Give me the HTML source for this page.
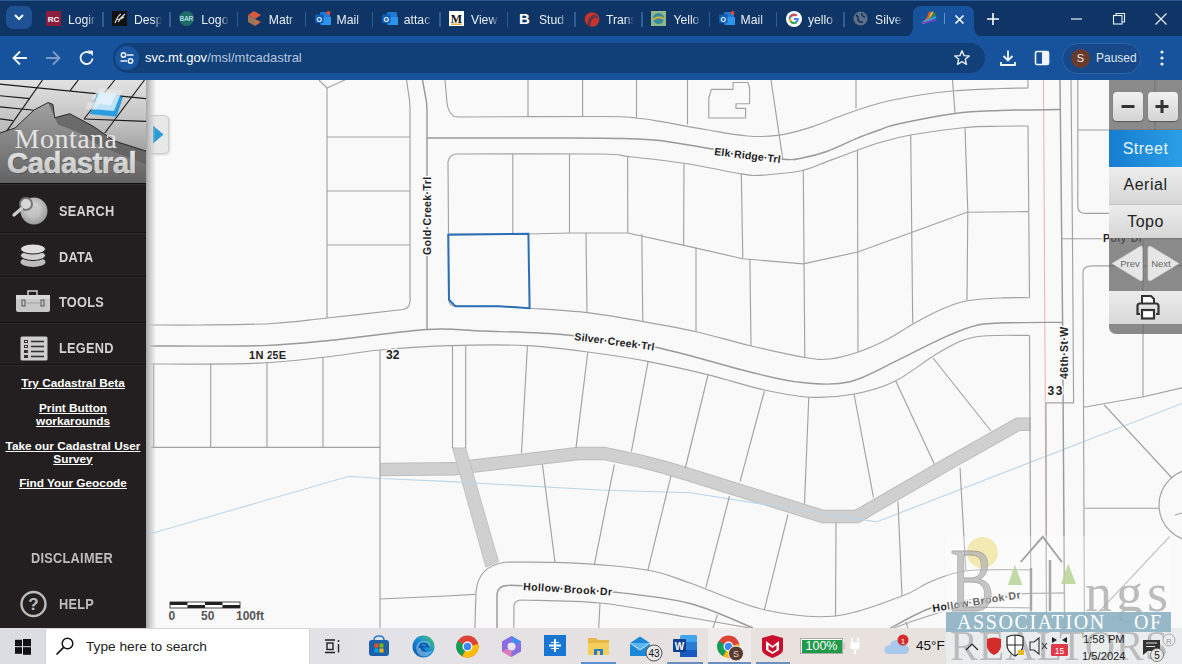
<!DOCTYPE html>
<html><head><meta charset="utf-8">
<style>
*{margin:0;padding:0;box-sizing:border-box}
html,body{width:1182px;height:664px;overflow:hidden;background:#f9f9f9;font-family:"Liberation Sans",sans-serif}
.abs{position:absolute}
#tabs{position:absolute;left:0;top:0;width:1182px;height:37px;background:#0f3566}
#tb{position:absolute;left:0;top:36px;width:1182px;height:44px;background:#17539c}
.tab{position:absolute;top:0;height:36px;color:#e6ecf5;font-size:13px}
.tab .fav{position:absolute;left:10px;top:11px;width:15px;height:15px}
.tab .tt{position:absolute;left:32px;top:11px;width:28px;overflow:hidden;white-space:nowrap;line-height:15px}
.sep{position:absolute;top:12px;width:1px;height:14px;background:#3d6aa3}
#side{position:absolute;left:0;top:80px;width:146px;height:548px;background:#231f20}
#map{position:absolute;left:146px;top:80px;width:1036px;height:548px;background:#f9f9f9;overflow:hidden}
#task{position:absolute;left:0;top:628px;width:1182px;height:36px;background:linear-gradient(to right,#e0e1e6 0%,#e3e2e6 35%,#e8e1de 65%,#e8e2de 80%,#e6e6e4 100%)}
.mi{position:absolute;left:59px;color:#d2d2d2;font-weight:bold;font-size:14.5px;letter-spacing:0.3px;transform:scaleX(0.88);transform-origin:0 0}
.row{position:absolute;left:0;width:146px;height:2px;background:#141213;border-bottom:1px solid #2e2a2b}
.lnk{position:absolute;left:0;width:146px;text-align:center;color:#fff;font-weight:bold;font-size:11.8px;text-decoration:underline;line-height:12.5px}
</style></head><body>

<!-- TAB STRIP -->
<div id="tabs">
  <div class="abs" style="left:0;top:0;width:1182px;height:1px;background:#2a5a94"></div>
  <div class="abs" style="left:6px;top:6px;width:26px;height:23px;border-radius:7px;background:#1e5294"></div>
  <svg class="abs" style="left:13px;top:12px" width="12" height="10"><path d="M2 3 L6 7 L10 3" stroke="#fff" stroke-width="2" fill="none"/></svg>
<div class="abs" style="left:46.0px;top:11px;width:16px;height:16px"><svg width="15" height="15"><rect width="15" height="15" rx="1.5" fill="#8a1c3c"/><text x="7.5" y="11" text-anchor="middle" font-family="Liberation Sans" font-weight="bold" font-size="8" fill="#fff">RC</text></svg></div><div class="abs" style="left:68.0px;top:12px;width:28px;height:16px;overflow:hidden;white-space:nowrap;color:#e8eef6;font-size:12.2px;line-height:16px;-webkit-mask-image:linear-gradient(to right,#000 70%,transparent)">Login</div><div class="abs" style="left:112.0px;top:11px;width:16px;height:16px"><svg width="15" height="15"><rect width="15" height="15" fill="#111"/><path d="M3 12 Q6 4 9 3 M6 11 Q9 6 13 3 M5 8 Q8 9 12 6" stroke="#ddd" stroke-width="1.2" fill="none"/></svg></div><div class="abs" style="left:134.0px;top:12px;width:28px;height:16px;overflow:hidden;white-space:nowrap;color:#e8eef6;font-size:12.2px;line-height:16px;-webkit-mask-image:linear-gradient(to right,#000 70%,transparent)">Desp</div><div class="abs" style="left:179.3px;top:11px;width:16px;height:16px"><svg width="15" height="15"><circle cx="7.5" cy="7.5" r="7.5" fill="#1f6b6a"/><text x="7.5" y="10" text-anchor="middle" font-family="Liberation Sans" font-size="6.5" fill="#dff">BAR</text></svg></div><div class="abs" style="left:201.3px;top:12px;width:28px;height:16px;overflow:hidden;white-space:nowrap;color:#e8eef6;font-size:12.2px;line-height:16px;-webkit-mask-image:linear-gradient(to right,#000 70%,transparent)">Logo</div><div class="abs" style="left:246.8px;top:11px;width:16px;height:16px"><svg width="15" height="15"><path d="M1 4 L7 0 L14 4 L8 8 Z" fill="#d65a3c"/><path d="M1 4 L8 8 L8 15 L1 11 Z" fill="#9c7458"/><path d="M8 8 L14 11 L8 15Z" fill="#c86a48"/></svg></div><div class="abs" style="left:268.8px;top:12px;width:28px;height:16px;overflow:hidden;white-space:nowrap;color:#e8eef6;font-size:12.2px;line-height:16px;-webkit-mask-image:linear-gradient(to right,#000 70%,transparent)">Matr</div><div class="abs" style="left:314.6px;top:11px;width:16px;height:16px"><svg width="16" height="15" viewBox="0 0 16 15"><rect x="5" y="1" width="10" height="13" rx="1" fill="#1f7ad6"/><rect x="7" y="6" width="9" height="8" fill="#2c95ea"/><rect x="0" y="3.5" width="8.5" height="8.5" rx="1" fill="#0c5db8"/><text x="4.2" y="10.5" text-anchor="middle" font-family="Liberation Sans" font-weight="bold" font-size="7" fill="#fff">O</text><circle cx="13.5" cy="2" r="2" fill="#e04a3a"/></svg></div><div class="abs" style="left:336.6px;top:12px;width:28px;height:16px;overflow:hidden;white-space:nowrap;color:#e8eef6;font-size:12.2px;line-height:16px;-webkit-mask-image:linear-gradient(to right,#000 70%,transparent)">Mail</div><div class="abs" style="left:381.8px;top:11px;width:16px;height:16px"><svg width="16" height="15" viewBox="0 0 16 15"><rect x="5" y="1" width="10" height="13" rx="1" fill="#1f7ad6"/><rect x="7" y="6" width="9" height="8" fill="#2c95ea"/><rect x="0" y="3.5" width="8.5" height="8.5" rx="1" fill="#0c5db8"/><text x="4.2" y="10.5" text-anchor="middle" font-family="Liberation Sans" font-weight="bold" font-size="7" fill="#fff">O</text></svg></div><div class="abs" style="left:403.8px;top:12px;width:28px;height:16px;overflow:hidden;white-space:nowrap;color:#e8eef6;font-size:12.2px;line-height:16px;-webkit-mask-image:linear-gradient(to right,#000 70%,transparent)">attac</div><div class="abs" style="left:449.0px;top:11px;width:16px;height:16px"><svg width="15" height="15"><rect width="15" height="15" fill="#fff"/><text x="7.5" y="12" text-anchor="middle" font-family="Liberation Serif" font-weight="bold" font-size="12" fill="#111">M</text><rect x="2" y="12.5" width="11" height="1.5" fill="#e0b040"/></svg></div><div class="abs" style="left:471.0px;top:12px;width:28px;height:16px;overflow:hidden;white-space:nowrap;color:#e8eef6;font-size:12.2px;line-height:16px;-webkit-mask-image:linear-gradient(to right,#000 70%,transparent)">View</div><div class="abs" style="left:516.9px;top:11px;width:16px;height:16px"><svg width="15" height="15"><text x="7.5" y="13" text-anchor="middle" font-family="Liberation Sans" font-weight="bold" font-size="15" fill="#fff">B</text></svg></div><div class="abs" style="left:538.9px;top:12px;width:28px;height:16px;overflow:hidden;white-space:nowrap;color:#e8eef6;font-size:12.2px;line-height:16px;-webkit-mask-image:linear-gradient(to right,#000 70%,transparent)">Stud</div><div class="abs" style="left:584.0px;top:11px;width:16px;height:16px"><svg width="16" height="16"><circle cx="8" cy="8.5" r="7.3" fill="#c8342c"/><path d="M3 15 Q4 6 9 4 Q13 3 14 8 Q12 6 9.5 7 Q6.5 9 6.5 15Z" fill="#0f3566" opacity="0.55"/></svg></div><div class="abs" style="left:606.0px;top:12px;width:28px;height:16px;overflow:hidden;white-space:nowrap;color:#e8eef6;font-size:12.2px;line-height:16px;-webkit-mask-image:linear-gradient(to right,#000 70%,transparent)">Trans</div><div class="abs" style="left:651.4px;top:11px;width:16px;height:16px"><svg width="15" height="15"><rect width="15" height="15" fill="#8fb88a"/><circle cx="7.5" cy="7.5" r="5.5" fill="#3a8a9a"/><path d="M2 9 Q7 4 13 8" stroke="#c8b040" stroke-width="2" fill="none"/></svg></div><div class="abs" style="left:673.4px;top:12px;width:28px;height:16px;overflow:hidden;white-space:nowrap;color:#e8eef6;font-size:12.2px;line-height:16px;-webkit-mask-image:linear-gradient(to right,#000 70%,transparent)">Yello</div><div class="abs" style="left:718.6px;top:11px;width:16px;height:16px"><svg width="16" height="15" viewBox="0 0 16 15"><rect x="5" y="1" width="10" height="13" rx="1" fill="#1f7ad6"/><rect x="7" y="6" width="9" height="8" fill="#2c95ea"/><rect x="0" y="3.5" width="8.5" height="8.5" rx="1" fill="#0c5db8"/><text x="4.2" y="10.5" text-anchor="middle" font-family="Liberation Sans" font-weight="bold" font-size="7" fill="#fff">O</text><circle cx="13.5" cy="2" r="2" fill="#e04a3a"/></svg></div><div class="abs" style="left:740.6px;top:12px;width:28px;height:16px;overflow:hidden;white-space:nowrap;color:#e8eef6;font-size:12.2px;line-height:16px;-webkit-mask-image:linear-gradient(to right,#000 70%,transparent)">Mail</div><div class="abs" style="left:785.9px;top:11px;width:16px;height:16px"><svg width="16" height="16"><circle cx="8" cy="8" r="8" fill="#fff"/><path d="M12.5 7 H8 V9 H10.8 A3.2 3.2 0 1 1 10 5.3 L11.4 3.9 A5.2 5.2 0 1 0 13 8 Z" fill="#4285f4"/><path d="M4 5.5 A5 5 0 0 1 11.4 3.9 L10 5.3 A3 3 0 0 0 5.7 6.5Z" fill="#ea4335"/><path d="M3 8 A5 5 0 0 0 4 11 L5.7 9.7 A3 3 0 0 1 5.4 7Z" fill="#fbbc05"/><path d="M4 11 A5 5 0 0 0 11.5 11.8 L10 10.5 A3 3 0 0 1 5.7 9.7Z" fill="#34a853"/></svg></div><div class="abs" style="left:807.9px;top:12px;width:28px;height:16px;overflow:hidden;white-space:nowrap;color:#e8eef6;font-size:12.2px;line-height:16px;-webkit-mask-image:linear-gradient(to right,#000 70%,transparent)">yello</div><div class="abs" style="left:853.1px;top:11px;width:16px;height:16px"><svg width="15" height="15"><circle cx="7.5" cy="7.5" r="7" fill="#5f6f85"/><path d="M3 4 Q6 6 5 9 Q7 12 10 11 M9 2 Q8 5 12 6" stroke="#0f3566" stroke-width="1.6" fill="none"/></svg></div><div class="abs" style="left:875.1px;top:12px;width:28px;height:16px;overflow:hidden;white-space:nowrap;color:#e8eef6;font-size:12.2px;line-height:16px;-webkit-mask-image:linear-gradient(to right,#000 70%,transparent)">Silver</div><div class="abs" style="left:102.0px;top:12px;width:1.5px;height:15px;background:#2f5d96"></div><div class="abs" style="left:169.3px;top:12px;width:1.5px;height:15px;background:#2f5d96"></div><div class="abs" style="left:236.8px;top:12px;width:1.5px;height:15px;background:#2f5d96"></div><div class="abs" style="left:304.6px;top:12px;width:1.5px;height:15px;background:#2f5d96"></div><div class="abs" style="left:371.8px;top:12px;width:1.5px;height:15px;background:#2f5d96"></div><div class="abs" style="left:439.0px;top:12px;width:1.5px;height:15px;background:#2f5d96"></div><div class="abs" style="left:506.9px;top:12px;width:1.5px;height:15px;background:#2f5d96"></div><div class="abs" style="left:574.0px;top:12px;width:1.5px;height:15px;background:#2f5d96"></div><div class="abs" style="left:641.4px;top:12px;width:1.5px;height:15px;background:#2f5d96"></div><div class="abs" style="left:708.6px;top:12px;width:1.5px;height:15px;background:#2f5d96"></div><div class="abs" style="left:775.9px;top:12px;width:1.5px;height:15px;background:#2f5d96"></div><div class="abs" style="left:843.1px;top:12px;width:1.5px;height:15px;background:#2f5d96"></div><svg class="abs" style="left:903px;top:0" width="84" height="37" viewBox="0 0 84 37">
<path d="M0 37 Q9 37 10 28 L10 14 Q10 6 18 6 L63 6 Q71 6 71 14 L71 28 Q72 37 81 37 Z" fill="#17539c"/></svg>
<svg class="abs" style="left:921px;top:11px" width="16" height="14" viewBox="0 0 16 14">
<path d="M1 12 L15 3" stroke="#3a8a3a" stroke-width="2"/><path d="M3 12 L12 1" stroke="#e0c030" stroke-width="2"/><path d="M5 12 L9 0.5" stroke="#e05030" stroke-width="2"/><path d="M1 12 L15 6" stroke="#30a0e0" stroke-width="2"/><path d="M1 12 L15 9" stroke="#8040c0" stroke-width="1.6"/></svg>
<div class="abs" style="left:944px;top:13px;width:1px;height:11px;background:#6a8ec0"></div>
<svg class="abs" style="left:954px;top:14px" width="11" height="11"><path d="M1.5 1.5 L9.5 9.5 M9.5 1.5 L1.5 9.5" stroke="#fff" stroke-width="1.6"/></svg>
<svg class="abs" style="left:986px;top:12px" width="14" height="14"><path d="M7 1 V13 M1 7 H13" stroke="#fff" stroke-width="1.6"/></svg>
<svg class="abs" style="left:1070px;top:12px" width="14" height="14"><path d="M1 7 H12" stroke="#e8eef6" stroke-width="1.2"/></svg>
<svg class="abs" style="left:1112px;top:12px" width="14" height="14"><rect x="1.5" y="3.5" width="8.5" height="8.5" fill="none" stroke="#e8eef6" stroke-width="1.1"/><path d="M4 3.5 V1.5 H12.5 V10 H10" fill="none" stroke="#e8eef6" stroke-width="1.1"/></svg>
<svg class="abs" style="left:1154px;top:12px" width="14" height="14"><path d="M1.5 1.5 L12.5 12.5 M12.5 1.5 L1.5 12.5" stroke="#e8eef6" stroke-width="1.2"/></svg>
</div>

<!-- TOOLBAR -->
<div id="tb">
  <svg class="abs" style="left:11px;top:13px" width="18" height="18"><path d="M16 9 H3 M9 2.5 L2.5 9 L9 15.5" stroke="#f0f4fa" stroke-width="1.8" fill="none"/></svg>
  <svg class="abs" style="left:44px;top:13px" width="18" height="18"><path d="M2 9 H15 M9 2.5 L15.5 9 L9 15.5" stroke="#7d9dc8" stroke-width="1.8" fill="none"/></svg>
  <svg class="abs" style="left:78px;top:13px" width="18" height="18"><path d="M14.5 9.5 A6 6 0 1 1 12.5 4.5" stroke="#f0f4fa" stroke-width="1.9" fill="none"/><path d="M9.5 1.5 L15 1.8 L14.8 7 Z" fill="#f0f4fa"/></svg>
  <div class="abs" style="left:113px;top:7px;width:872px;height:30px;border-radius:15px;background:#113f78"></div>
  <div class="abs" style="left:115px;top:10px;width:24px;height:24px;border-radius:12px;background:#1a56a0"></div>
  <svg class="abs" style="left:119px;top:14px" width="16" height="16"><path d="M8 5 H14.5 M1.5 11 H8" stroke="#f0f4fa" stroke-width="1.6"/><circle cx="4.5" cy="5" r="2.2" fill="none" stroke="#f0f4fa" stroke-width="1.5"/><circle cx="11.5" cy="11" r="2.2" fill="none" stroke="#f0f4fa" stroke-width="1.5"/></svg>
  <div class="abs" style="left:145px;top:14px;font-size:13px;line-height:16px;color:#fff;white-space:nowrap">svc.mt.gov<span style="color:#b4c6de">/msl/mtcadastral</span></div>
  <svg class="abs" style="left:953px;top:13px" width="18" height="18"><path d="M9 1.8 L11.1 6.6 L16.2 7 L12.3 10.3 L13.5 15.3 L9 12.6 L4.5 15.3 L5.7 10.3 L1.8 7 L6.9 6.6 Z" fill="none" stroke="#e8eef6" stroke-width="1.4" stroke-linejoin="round"/></svg>
  <svg class="abs" style="left:999px;top:13px" width="18" height="18"><path d="M9 1.5 V11 M4.5 7 L9 11.5 L13.5 7 M2 13 V16 H16 V13" stroke="#f0f4fa" stroke-width="1.8" fill="none"/></svg>
  <svg class="abs" style="left:1034px;top:14px" width="16" height="16"><rect x="1.5" y="1.5" width="13" height="13" rx="1.5" fill="none" stroke="#f0f4fa" stroke-width="1.6"/><rect x="8" y="1.5" width="6.5" height="13" fill="#f0f4fa"/></svg>
  <div class="abs" style="left:1062px;top:7px;width:79px;height:31px;border-radius:15.5px;background:#17498a;border:1px solid #2b63a8"></div>
  <div class="abs" style="left:1071px;top:13px;width:19px;height:19px;border-radius:10px;background:#6a3b2c;color:#eee;font-size:11px;line-height:19px;text-align:center">S</div>
  <div class="abs" style="left:1096px;top:14px;font-size:12px;line-height:16px;color:#dde6f2">Paused</div>
  <svg class="abs" style="left:1158px;top:13px" width="8" height="18"><circle cx="4" cy="3" r="1.6" fill="#f0f4fa"/><circle cx="4" cy="9" r="1.6" fill="#f0f4fa"/><circle cx="4" cy="15" r="1.6" fill="#f0f4fa"/></svg>
</div>

<!-- MAP -->
<div id="map"></div>
<!-- MAPSVG -->
<svg class="abs" style="left:0;top:0" width="1182" height="664" viewBox="0 0 1182 664">
<defs><clipPath id="mc"><rect x="146" y="80" width="1036" height="548"/></clipPath></defs>
<g clip-path="url(#mc)">
<path d="M380 469.5 L455 468.8 L470 466.5 L578 453.5 L604 453.5 L640 461 L665 467.5 L690 475 L823 516.6 L857 516.4 L950 462.7 L1018 424.2 L1031 424.2" fill="none" stroke="#bdbdbd" stroke-width="13.5"/>
<path d="M380 469.5 L455 468.8 L470 466.5 L578 453.5 L604 453.5 L640 461 L665 467.5 L690 475 L823 516.6 L857 516.4 L950 462.7 L1018 424.2 L1031 424.2" fill="none" stroke="#d0d0d0" stroke-width="11.5"/>
<path d="M452.5 447.9 L465.7 447.9 L498.6 561.5 L485.8 567 Z" fill="#d0d0d0" stroke="#bdbdbd" stroke-width="0.8"/>
<path d="M146 535 L349 476.3 L380 478.5 L446 481.4 L600 490 L690 492.8 L876.6 521.9 L1182 403.5" fill="none" stroke="#bcd6ea" stroke-width="1.1"/>
<path d="M1043.5 80 L1046.5 628" fill="none" stroke="#eab0b0" stroke-width="1"/>
<g fill="none" stroke="#a2a2a2" stroke-width="1.15" stroke-linejoin="round">
<path d="M403.0 309.5 C390.3 310.9 348.7 315.7 327.0 318.0 C305.3 320.3 294.2 322.3 273.0 323.5 C251.8 324.7 220.5 324.8 200.0 325.0 C179.5 325.2 158.3 325.0 150.0 325.0"/>
<path d="M146.0 364.0 C163.8 363.9 223.0 364.5 252.6 363.4 C282.2 362.3 302.5 359.5 323.7 357.3 C344.9 355.1 358.8 351.9 380.0 350.0 C401.2 348.1 426.5 346.3 451.0 345.6 C475.5 344.9 504.2 344.5 527.0 345.6 C549.8 346.7 567.7 349.3 588.0 352.0 C608.3 354.7 628.9 357.8 649.0 361.6 C669.1 365.4 689.3 370.2 708.5 374.9 C727.7 379.6 747.5 386.3 764.4 390.0 C781.3 393.7 795.0 396.5 810.0 397.2 C825.0 397.9 840.3 396.7 854.5 394.0 C868.7 391.3 880.9 388.1 895.0 381.2 C909.1 374.3 925.7 359.9 939.0 352.5 C952.3 345.1 959.9 339.9 975.0 337.0 C990.1 334.1 1020.4 335.7 1029.5 335.4"/>
<path d="M455.4 306.3 C462.6 306.3 486.4 306.0 498.8 306.3 C511.2 306.6 514.9 307.1 529.6 308.2 C544.3 309.2 568.1 310.4 587.0 312.6 C605.9 314.8 624.6 318.3 642.8 321.5 C661.0 324.7 678.1 327.7 696.0 331.7 C713.9 335.7 732.2 341.4 750.4 345.7 C768.6 350.0 791.7 355.3 805.0 357.5 C818.3 359.7 821.1 359.9 830.0 359.0 C838.9 358.1 848.6 355.3 858.3 352.0 C868.0 348.7 878.9 343.7 888.0 339.0 C897.1 334.3 904.3 328.8 913.0 324.0 C921.7 319.2 931.2 313.8 940.0 310.0 C948.8 306.2 956.0 303.0 966.0 301.0 C976.0 299.0 989.4 298.6 1000.0 298.0 C1010.6 297.4 1024.6 297.8 1029.5 297.7"/>
<path d="M455.4 306.3 Q449 306 449 300 L448 162 Q449 156 454 154.5 L456 154  C480.0 154.0 571.3 153.6 600.0 154.0 C628.7 154.4 614.0 154.9 628.0 156.5 C642.0 158.1 665.4 160.4 684.2 163.3 C703.0 166.2 728.9 171.9 741.0 173.9 C753.1 175.9 750.3 175.5 757.0 175.4 C763.7 175.3 773.3 174.4 781.0 173.5 C788.7 172.6 795.5 172.2 803.3 170.2 C811.0 168.2 818.5 164.7 827.5 161.4 C836.5 158.1 848.5 153.5 857.3 150.3 C866.0 147.2 871.1 145.1 880.0 142.5 C888.9 139.9 896.4 137.5 910.6 135.0 C924.8 132.5 950.1 129.0 965.0 127.5 C979.9 126.0 989.5 126.5 1000.0 126.2 C1010.5 126.0 1023.3 126.0 1028.0 126.0 L1029.5 297.7"/>
<path d="M445 80 L447 103 Q448 112 454 116.5 L458 117  C482.5 116.9 575.3 116.3 605.0 116.5 C634.7 116.7 626.8 117.2 636.0 118.0 C645.2 118.8 648.2 119.4 660.0 121.4 C671.8 123.4 691.9 127.4 706.5 129.8 C721.1 132.2 735.7 135.1 747.5 136.0 C759.3 136.9 767.1 136.8 777.3 135.4 C787.5 134.1 797.4 131.5 808.9 127.9 C820.4 124.3 834.1 118.2 846.0 114.0 C857.9 109.8 867.7 106.2 880.0 103.0 C892.3 99.8 907.5 97.0 920.0 95.0 C932.5 93.0 941.7 91.8 955.0 90.7 C968.3 89.6 987.8 89.0 1000.0 88.5 C1012.2 88.0 1023.3 88.1 1028.0 88.0 L1028 80"/>
<path d="M449 234 L529 234 L570 233 L627.8 233 L684 245.4 L742.8 258.7 L803.2 263.9 L857.7 252 L912.2 232.2 L967 212.3 L1028 211.6"/>
<path d="M474.9 628 L476 592 Q478 566 505 562.2  C513.3 562.2 537.2 561.8 555.0 562.4 C572.8 563.0 595.0 564.3 611.6 565.8 C628.2 567.3 641.4 568.6 654.5 571.5 C667.6 574.4 671.7 576.6 690.0 583.0 C708.3 589.4 740.0 604.3 764.3 609.8 C788.5 615.3 812.5 618.3 835.5 616.0 C858.5 613.7 886.6 601.5 902.0 596.0 C917.4 590.5 919.2 586.8 927.7 583.0 C936.2 579.2 945.0 575.7 953.0 573.5 C961.0 571.3 963.0 570.6 976.0 570.0 C989.0 569.4 1021.8 569.8 1031.0 569.8"/>
<path d="M513.8 628 L514 605 Q515 600 523 600  C535.8 600.5 572.8 600.2 600.0 603.0 C627.2 605.8 661.0 612.8 686.0 617.0 C711.0 621.2 739.3 626.2 750.0 628.0"/>
<path d="M893.8 628.0 C899.4 626.0 916.4 619.6 927.7 616.3 C939.0 613.0 944.3 609.4 961.5 608.0 C978.7 606.6 1019.4 607.8 1031.0 607.8"/>
<path d="M319 80 L327 88 L345 80"/>
<path d="M327 88 L327 318"/>
<path d="M327 137 L410 137"/>
<path d="M327 191 L410 191"/>
<path d="M327 245 L410 245"/>
<path d="M406.5 80 L409.5 100 L410 108 L410 301 Q410 308 403 309.5"/>
<path d="M528 80 L528 116.5 M582.6 80 L582.6 116.5 M636.5 80 L636.5 118 M687.5 80 L687.5 124.5 M771 80 L782.8 159.2 M856 80 L856 108.4 M952.5 80 L955 113"/>
<path d="M733 82.5 L748 82.5 L749.6 88 L749.6 103.7 L736 103.7 L736 108.4 L745.6 108.4 L745.6 118 L708.8 118 L708.8 98 L711.4 89.4 L733 89.4 Z"/>
<path d="M512.8 154 L512.8 234 M569.5 154 L569.5 233 M627.6 156.7 L627.8 233 M684 163.3 L683.6 245.4 M741.3 173.9 L742.8 258.7 M803.3 170.2 L804.8 358 M857.5 150.3 L858 352 M910.7 135 L912.7 323 M965 127 L967.8 212 L967 300"/>
<path d="M586 233 L587 313 M641.8 234 L642.8 321.5 M696 247.5 L696 331.7 M749.9 259.5 L751 346"/>
<path d="M1029.5 335.4 L1031 628"/>
<path d="M153.6 364 L153.6 447.4 M210.7 363.5 L210.7 447.4 M267 362 L267 447.4 M323 357.5 L323 447.4 M380 350 L380 628 M151 447.4 L380 447.4"/>
<path d="M452.5 346 L452.5 447.9 M465.7 346 L465.7 447.9 M527.4 346 L521.5 453 M587.8 352 L576 447.9 M648 362 L631.4 451.7 M708 375 L685.3 468 M764.4 391 L740 481.7 M808.8 397 L804.5 503.8 M854 394 L873.5 497.5 M895.8 381 L934.3 464 M933 358 L991 431"/>
<path d="M542.4 464.3 L555 562.4 M614.4 464.3 L594.4 564.4 M671 475.7 L647.9 570.1 M729.5 496 L705.8 587.7 M788 514.3 L764.3 609.8 M836 522.8 L835.5 616 M898 501.6 L902 596 M960 467.5 L965.8 570.6 M600 603 L598.7 628 M717.5 614.7 L713 628 M905.7 622 L908 628"/>
<path d="M380 599 L446 596 L475 594.4"/>
<path d="M1071 80 L1072.4 228 L1073.6 402.8 L1046 402.8 L1046.5 628"/>
<path d="M1077.8 80 L1077.8 206.7 Q1078 213.4 1086 213.4 L1182 213.4 M1078 130 L1182 130"/>
<path d="M1062 238.7 L1182 238.7"/>
<path d="M1084.4 628 L1083 272 Q1083 265.8 1093 265.8 L1182 265.8"/>
<path d="M1084 407.3 L1143.5 396.8 L1182 387.8 M1143 238.7 L1143 396.8 M1155 80 L1155 130 M1104.3 405 L1172 478 M1085 508.2 L1159 508.2 M1169.8 536.4 L1085 626.7 M1175 515 L1182 513"/>
<circle cx="1195" cy="505" r="36"/>
</g>
<g fill="none" stroke="#9a9a9a" stroke-width="1.45" stroke-linejoin="round">
<path d="M146.0 346.0 C165.5 345.9 231.7 346.6 263.0 345.6 C294.3 344.6 306.7 342.7 334.0 340.0 C361.3 337.3 402.2 331.0 427.0 329.5 C451.8 328.0 459.7 330.1 483.0 331.0 C506.3 331.9 538.4 332.3 567.0 335.0 C595.6 337.7 624.0 340.8 654.5 347.0 C685.0 353.2 725.4 366.1 750.0 372.0 C774.6 377.9 785.3 380.9 802.0 382.5 C818.7 384.1 833.8 385.5 850.0 381.7 C866.2 377.9 884.0 366.7 899.0 359.6 C914.0 352.5 926.8 345.1 940.0 339.3 C953.2 333.5 964.7 327.8 978.0 325.0 C991.3 322.2 1005.9 323.0 1020.0 322.6 C1034.1 322.2 1055.5 322.4 1062.6 322.4"/>
<path d="M427.0 138.0 C449.2 138.0 527.4 137.9 560.0 138.0 C592.6 138.1 606.0 138.1 622.7 138.5 C639.4 138.9 644.8 138.7 660.0 140.5 C675.2 142.3 693.5 146.2 714.0 149.3 C734.5 152.4 767.9 157.8 782.8 159.2 C797.7 160.6 795.8 159.0 803.3 157.7 C810.8 156.4 818.5 154.4 827.5 151.2 C836.5 147.9 848.5 141.8 857.3 138.2 C866.0 134.6 873.2 132.2 880.0 129.8 C886.8 127.4 885.5 126.7 898.0 124.0 C910.5 121.3 938.0 115.8 955.0 113.5 C972.0 111.2 982.5 111.2 1000.0 110.5 C1017.5 109.8 1050.0 109.7 1060.0 109.5"/>
<path d="M497 628 L497 594 Q498 585.5 508 585.5  C510.5 585.5 505.5 584.7 523.0 585.8 C540.5 586.9 585.2 589.0 613.0 592.0 C640.8 595.0 666.7 597.5 690.0 603.5 C713.3 609.5 742.5 623.9 753.0 628.0"/>
<path d="M890.5 628.0 C897.2 624.7 916.9 612.8 931.0 608.0 C945.1 603.2 960.3 601.3 975.0 599.0 C989.7 596.7 1004.2 595.0 1019.0 594.0 C1033.8 593.0 1056.5 593.2 1064.0 593.0"/>
<path d="M422.5 80 L426.5 102 L427 110 L427 329.5"/>
<path d="M1060 80 L1062.6 322.4 L1064.6 628"/>
</g>
<path d="M448.2 234.7 L528.4 233.7 L529.6 308.2 L498.8 306.3 L455.4 306.3 L449 299.8 Z" fill="none" stroke="#2b70b6" stroke-width="2"/>
<g font-family="Liberation Sans" font-weight="bold" fill="#222" stroke="#f9f9f9" stroke-width="3" paint-order="stroke" stroke-linejoin="round">
<text x="249" y="358.5" font-size="11" letter-spacing="0.3">1N 2<tspan dx="-1">5</tspan>E</text>
<text x="386" y="358.5" font-size="12">32</text>
<text x="1047.5" y="394.5" font-size="12" letter-spacing="1.5">33</text>
<text font-size="10.5" transform="translate(431,255) rotate(-90)" letter-spacing="0.4">Gold·Creek·Trl</text>
<text font-size="10.5" transform="translate(1068,379) rotate(-90)" letter-spacing="0.4">46th·St·W</text>
<text font-size="10.5" transform="translate(714,155) rotate(7)" letter-spacing="0.15">Elk·Ridge·Trl</text>
<text font-size="10.5" transform="translate(574,340) rotate(7.5)" letter-spacing="0.2">Silver·Creek·Trl</text>
<text font-size="10.5" transform="translate(523,590) rotate(3.5)" letter-spacing="0.4">Hollow·Brook·Dr</text>
<text font-size="10.5" transform="translate(933,612) rotate(-9)" letter-spacing="0.4">Hollow·Brook·Dr</text>
<text font-size="10.5" x="1103" y="242" letter-spacing="0.4">Poly·Dr</text>
</g>
<g>
<rect x="170" y="602" width="70" height="6" fill="#fff" stroke="#222" stroke-width="0.8"/>
<rect x="170" y="602" width="17.5" height="3" fill="#222"/><rect x="187.5" y="605" width="17.5" height="3" fill="#222"/>
<rect x="205" y="602" width="17.5" height="3" fill="#222"/><rect x="222.5" y="605" width="17.5" height="3" fill="#222"/>
<text x="168.5" y="620" font-family="Liberation Sans" font-weight="bold" font-size="12" fill="#555">0</text>
<text x="201" y="620" font-family="Liberation Sans" font-weight="bold" font-size="12" fill="#555">50</text>
<text x="236" y="620" font-family="Liberation Sans" font-weight="bold" font-size="12" fill="#555">100ft</text>
</g>
</g>
</svg>
<!-- /MAPSVG -->


<!-- RIGHT PANEL -->
<div class="abs" style="left:1109px;top:80px;width:73px;height:254px;background:rgba(98,98,98,0.74);border-bottom-left-radius:7px"></div>
<div class="abs" style="left:1113px;top:92px;width:30px;height:29px;border-radius:4px;background:linear-gradient(#f2f2f2,#d4d4d4);box-shadow:0 1px 1px #555"></div>
<div class="abs" style="left:1148px;top:92px;width:30px;height:29px;border-radius:4px;background:linear-gradient(#f2f2f2,#d4d4d4);box-shadow:0 1px 1px #555"></div>
<svg class="abs" style="left:1113px;top:92px" width="65" height="29"><path d="M8.5 14.5 H21.5" stroke="#333" stroke-width="3"/><path d="M42.5 14.5 H55.5 M49 8 V21" stroke="#333" stroke-width="3"/></svg>
<div class="abs" style="left:1109px;top:130px;width:73px;height:36.5px;background:linear-gradient(to right,#167cd0,#2a9fe6)"></div>
<div class="abs" style="left:1109px;top:166.5px;width:73px;height:37px;background:linear-gradient(#ededed,#d6d6d6)"></div>
<div class="abs" style="left:1109px;top:204px;width:73px;height:33.5px;background:linear-gradient(#ededed,#d6d6d6);border-top:1px solid #c4c4c4"></div>
<div class="abs" style="left:1109px;top:140px;width:73px;text-align:center;font-size:16px;line-height:18px;color:#e8f5ff;letter-spacing:0.5px">Street</div>
<div class="abs" style="left:1109px;top:176px;width:73px;text-align:center;font-size:16px;line-height:18px;color:#222;letter-spacing:0.5px">Aerial</div>
<div class="abs" style="left:1109px;top:213px;width:73px;text-align:center;font-size:16px;line-height:18px;color:#222;letter-spacing:0.5px">Topo</div>
<svg class="abs" style="left:1109px;top:244px" width="73" height="40">
<path d="M3 19.5 L31 2.5 Q33.5 1.5 33.5 4 L33.5 35 Q33.5 37.5 31 36.5 Z" fill="#e6e6e6" stroke="#d0d0d0" stroke-width="0.6"/>
<path d="M70 19.5 L42 2.5 Q39 1.5 39 4 L39 35 Q39 37.5 42 36.5 Z" fill="#e6e6e6" stroke="#d0d0d0" stroke-width="0.6"/>
<text x="21" y="23" text-anchor="middle" font-family="Liberation Sans" font-size="9.5" fill="#666">Prev</text>
<text x="52" y="23" text-anchor="middle" font-family="Liberation Sans" font-size="9.5" fill="#666">Next</text>
</svg>
<div class="abs" style="left:1109px;top:291px;width:73px;height:33px;background:linear-gradient(#ececec,#d8d8d8)"></div>
<svg class="abs" style="left:1135px;top:294px" width="26" height="27" viewBox="0 0 26 27">
<path d="M7 9 V2 H16 L19 5 V9" fill="#fff" stroke="#333" stroke-width="2"/>
<path d="M5 20 H2.5 V12 Q2.5 9.5 5 9.5 H21 Q23.5 9.5 23.5 12 V20 H21" fill="none" stroke="#333" stroke-width="2.2"/>
<rect x="7" y="16" width="12" height="8.5" fill="#fff" stroke="#333" stroke-width="2.2"/>
</svg>
<!-- EXPAND TAB -->
<div class="abs" style="left:148px;top:115px;width:21px;height:39px;background:#e8e8e8;border:1px solid #cfcfcf;border-left:none;border-radius:0 5px 5px 0;box-shadow:1px 1px 2px rgba(0,0,0,0.15)"></div>
<svg class="abs" style="left:152px;top:125px" width="13" height="20"><path d="M1 0.5 L11.5 9.5 L1 18.5 Z" fill="#2a9bd8"/></svg>
<!-- SIDEBAR -->
<div id="side">
  <svg class="abs" style="left:0;top:0" width="146" height="104" viewBox="0 0 146 104">
    <defs>
      <linearGradient id="hg" x1="0" y1="0" x2="0" y2="1">
        <stop offset="0" stop-color="#e2e2e2"/><stop offset="0.45" stop-color="#bdbdbd"/><stop offset="1" stop-color="#7c7c7c"/>
      </linearGradient>
      <linearGradient id="mg" x1="0" y1="0" x2="0" y2="1">
        <stop offset="0" stop-color="#a0a0a0"/><stop offset="0.6" stop-color="#7c7c7c"/><stop offset="1" stop-color="#626262"/>
      </linearGradient>
      <linearGradient id="tg" x1="0" y1="0" x2="0" y2="1">
        <stop offset="0" stop-color="#ececec"/><stop offset="1" stop-color="#bdbdbd"/>
      </linearGradient>
    </defs>
    <rect x="0" y="0" width="146" height="104" fill="url(#hg)"/>
    <g stroke="#1c1c1c" stroke-width="1.15" fill="none">
      <path d="M0 4.1 L146 18.6"/>
      <path d="M0 15.7 L30 18.6"/>
      <path d="M0 26.9 L34 30.2"/>
      <path d="M0 38.9 L13 40.6"/>
      <path d="M84 39 L146 41.4"/>
      <path d="M42.5 0 L6 52.2"/>
      <path d="M78.3 0 L70 10.8"/>
      <path d="M114.7 0 L84 39"/>
      <path d="M144.5 0 L104.8 53"/>
    </g>
    <path d="M0 53 L15 48 L34 30 L48.1 22.5 L53 24.5 L54.7 37.8 L69.7 33.7 L92.9 46.1 L114.4 61 L146 71 L146 104 L0 104 Z" fill="url(#mg)"/>
    <path d="M48.1 22.5 L53 24.5 L54.7 37.8 L69.7 33.7 L92.9 46.1 L114.4 61 L146 71 L146 84.2 L99.5 66 L79.6 52.7 L58 44.4 Z" fill="#5e5e5e" opacity="0.75"/>
    <path d="M0 53 L15 48 L34 30 L48.1 22.5 L53 24.5 L54.7 37.8 L69.7 33.7 L92.9 46.1 L114.4 61 L146 71" fill="none" stroke="#1e1e1e" stroke-width="0.9"/>
    <path d="M100 8 L124 10 L117 20 L91 19 Z" fill="#e8e8e8" opacity="0.7"/>
    <path d="M97 14 L123 17 L116.4 36.8 L89.9 34 Z" fill="#2b9ee0"/>
    <path d="M98 13 L120 15.5 L114 31 L92 29 Z" fill="#bfe2f6"/>
    <path d="M100 12 L116 13.5 L111 25 L95 24 Z" fill="#e4f2fb" opacity="0.9"/>
    <path d="M88 22 L100 23 L96 30 L85 29Z" fill="#eeeeee" opacity="0.5"/>
    <text x="14.5" y="68" font-family="Liberation Serif" font-size="28" fill="#e4e4e4" letter-spacing="0.5">Montana</text>
    <text x="8" y="93.5" font-family="Liberation Sans" font-weight="bold" font-size="29.5" fill="#2a2a2a" opacity="0.5" letter-spacing="-0.6">Cadastral</text>
    <text x="7" y="93" font-family="Liberation Sans" font-weight="bold" font-size="29.5" fill="url(#tg)" stroke="#dcdcdc" stroke-width="0.5" letter-spacing="-0.6">Cadastral</text>
  </svg>
  <div class="row" style="top:103px"></div>
  <div class="row" style="top:152px"></div>
  <div class="row" style="top:196px"></div>
  <div class="row" style="top:242px"></div>
  <div class="row" style="top:284px"></div>
  <svg class="abs" style="left:10px;top:114px" width="40" height="34" viewBox="0 0 40 34">
    <defs><radialGradient id="gl" cx="0.45" cy="0.4" r="0.6"><stop offset="0" stop-color="#e8e8e8"/><stop offset="1" stop-color="#9a9a9a"/></radialGradient></defs>
    <circle cx="24" cy="17" r="13.5" fill="url(#gl)"/>
    <path d="M16 10 Q22 8 26 12 Q30 18 24 22 Q18 20 16 10Z" fill="#bdbdbd" opacity="0.6"/>
    <circle cx="16" cy="10" r="6" fill="#d8d8d8" stroke="#777" stroke-width="2"/>
    <path d="M11.5 14.5 L4 21" stroke="#cfcfcf" stroke-width="3.2" stroke-linecap="round"/>
  </svg>
  <svg class="abs" style="left:19px;top:163px" width="28" height="26" viewBox="0 0 28 26">
    <ellipse cx="14" cy="19" rx="12.5" ry="5" fill="#bcbcbc"/>
    <ellipse cx="14" cy="12.5" rx="12.5" ry="5" fill="#d0d0d0" stroke="#231f20" stroke-width="1"/>
    <ellipse cx="14" cy="6" rx="12.5" ry="5" fill="#dedede" stroke="#231f20" stroke-width="1"/>
  </svg>
  <svg class="abs" style="left:15px;top:210px" width="36" height="24" viewBox="0 0 36 24">
    <path d="M13 5 L13 1 L22 1 L22 5" stroke="#cfcfcf" stroke-width="1.5" fill="none"/>
    <rect x="1" y="5" width="34" height="17" rx="2" fill="#c8c8c8"/>
    <rect x="1" y="5" width="34" height="4" fill="#d8d8d8"/>
    <rect x="7" y="10" width="3" height="6" fill="none" stroke="#555" stroke-width="1"/>
    <rect x="26" y="10" width="3" height="6" fill="none" stroke="#555" stroke-width="1"/>
    <path d="M11 13 L25 13" stroke="#999" stroke-width="0.8"/>
  </svg>
  <svg class="abs" style="left:20px;top:256px" width="28" height="26" viewBox="0 0 28 26">
    <rect x="0.5" y="0.5" width="27" height="24" rx="1.5" fill="#cfcfcf"/>
    <g fill="#333"><rect x="4" y="4" width="4" height="3"/><rect x="4" y="9" width="4" height="3"/><rect x="4" y="14" width="4" height="3"/><rect x="4" y="19" width="4" height="3"/></g>
    <g fill="#eee"><rect x="5" y="5" width="2" height="1"/><rect x="5" y="10" width="2" height="1"/></g>
    <g stroke="#333" stroke-width="1.6"><path d="M11 5.5 H24"/><path d="M11 10.5 H24"/><path d="M11 15.5 H24"/><path d="M11 20.5 H24"/></g>
  </svg>
  <div class="mi" style="top:123px">SEARCH</div>
  <div class="mi" style="top:169px">DATA</div>
  <div class="mi" style="top:214px">TOOLS</div>
  <div class="mi" style="top:260px">LEGEND</div>
  <div class="lnk" style="top:297px">Try Cadastral Beta</div>
  <div class="lnk" style="top:322px">Print Button<br>workarounds</div>
  <div class="lnk" style="top:360px">Take our Cadastral User<br>Survey</div>
  <div class="lnk" style="top:397px">Find Your Geocode</div>
  <div class="mi" style="top:470px;left:31px;color:#bdbdbd">DISCLAIMER</div>
  <svg class="abs" style="left:19px;top:510px" width="30" height="30" viewBox="0 0 30 30">
    <circle cx="14.5" cy="14" r="12" fill="none" stroke="#bdbdbd" stroke-width="2.4"/>
    <text x="14.5" y="20" text-anchor="middle" font-family="Liberation Sans" font-weight="bold" font-size="17" fill="#bdbdbd">?</text>
  </svg>
  <div class="mi" style="top:516px;color:#bdbdbd">HELP</div>
  <div class="abs" style="left:146px;top:0;width:10px;height:548px;background:linear-gradient(to right,#a6a6a6,#c4c4c4 30%,rgba(249,249,249,0))"></div>
</div>

<!-- TASKBAR -->
<div id="task">
  <div class="abs" style="left:0;top:0;width:45px;height:36px;background:#dcdde2"></div>
  <svg class="abs" style="left:15px;top:11px" width="16" height="16"><g fill="#111"><rect x="0" y="0.8" width="7" height="6.4"/><rect x="8" y="0" width="8" height="7.2"/><rect x="0" y="8.2" width="7" height="6.6"/><rect x="8" y="8.2" width="8" height="7.6"/></g></svg>
  <div class="abs" style="left:45px;top:0;width:265px;height:36px;background:#fff;border:1px solid #d4d4d8;border-bottom:none"></div>
  <svg class="abs" style="left:55px;top:9px" width="20" height="19"><circle cx="12.5" cy="6.5" r="5.3" fill="none" stroke="#111" stroke-width="1.5"/><path d="M8.6 10.4 L1.5 17.5" stroke="#111" stroke-width="1.7"/></svg>
  <div class="abs" style="left:86px;top:10px;font-size:13.7px;line-height:17px;color:#222;white-space:nowrap">Type here to search</div>
  <svg class="abs" style="left:324px;top:11px" width="18" height="15"><g fill="none" stroke="#222" stroke-width="1.4"><path d="M1 1 H11 M1 13.5 H11"/><rect x="3" y="4" width="6" height="6.5"/><path d="M14.5 1 V3 M14.5 5 V13.5"/></g></svg>
  <svg class="abs" style="left:368px;top:7px" width="22" height="22" viewBox="0 0 22 22"><path d="M6 5 Q6 1 11 1 Q16 1 16 5" fill="none" stroke="#2a7ad0" stroke-width="1.6"/><rect x="1" y="5" width="20" height="16" rx="3" fill="#1d5fa8"/><rect x="6.5" y="8.5" width="4" height="4" fill="#f25022"/><rect x="11.5" y="8.5" width="4" height="4" fill="#7fba00"/><rect x="6.5" y="13.5" width="4" height="4" fill="#00a4ef"/><rect x="11.5" y="13.5" width="4" height="4" fill="#ffb900"/></svg>
  <svg class="abs" style="left:412px;top:7px" width="23" height="23" viewBox="0 0 23 23"><defs><linearGradient id="eg" x1="0" y1="1" x2="1" y2="0"><stop offset="0" stop-color="#0a4fa0"/><stop offset="0.5" stop-color="#1a8ad8"/><stop offset="1" stop-color="#4ac86a"/></linearGradient></defs><circle cx="11.5" cy="11.5" r="11" fill="url(#eg)"/><path d="M4 13 Q5 6 12 6 Q18 6 18.5 11 L9 11 Q9 16 14 17 Q17 17.5 20 16 Q17 21.5 11 21.5 Q5 21 4 13Z" fill="#e4f4ff" opacity="0.35"/><path d="M7.5 13 Q8 8.5 12 8.5 Q15.5 8.5 16 11.5 L9.5 11.5 Q9.5 15.5 13.5 16" fill="none" stroke="#0b5cb0" stroke-width="2.2"/></svg>
  <svg class="abs" style="left:456px;top:7px" width="23" height="23" viewBox="0 0 23 23"><circle cx="11.5" cy="11.5" r="11" fill="#db4437"/><path d="M11.5 11.5 L22.2 9 A11 11 0 0 1 6 21 Z" fill="#fbbc05"/><path d="M11.5 11.5 L6 21 A11 11 0 0 1 1.5 6 Z" fill="#0f9d58"/><circle cx="11.5" cy="11.5" r="5" fill="#fff"/><circle cx="11.5" cy="11.5" r="3.8" fill="#4285f4"/></svg>
  <svg class="abs" style="left:500px;top:7px" width="23" height="23" viewBox="0 0 23 23"><path d="M11.5 1 L21 6.5 L21 16.5 L11.5 22 L2 16.5 L2 6.5 Z" fill="#8a6ee0"/><path d="M11.5 1 L21 6.5 L16 9.5 L11.5 7Z" fill="#3f8ef0"/><path d="M2 16.5 L7 13.5 L11.5 16 L11.5 22Z" fill="#e07ab8"/><circle cx="11.5" cy="11.5" r="4" fill="#e8e4f0"/></svg>
  <div class="abs" style="left:544px;top:7px;width:22px;height:21px;background:#1976d2"></div>
  <svg class="abs" style="left:549px;top:11px" width="12" height="13"><g fill="#fff"><rect x="5" y="0" width="2" height="13"/><rect x="0" y="5.5" width="12" height="2"/><rect x="2" y="3" width="8" height="1"/><rect x="2" y="9" width="8" height="1"/></g></svg>
  <svg class="abs" style="left:588px;top:9px" width="21" height="19" viewBox="0 0 21 19"><path d="M0 1 H8 L10 3 H21 V18 H0Z" fill="#e8b84a"/><rect x="0" y="6" width="21" height="12" fill="#f6cf5a"/><path d="M6 18 V12 H15 V18" fill="#2a7cc8"/><rect x="9" y="14" width="3" height="4" fill="#f6cf5a"/></svg>
  <div class="abs" style="left:581px;top:34px;width:35px;height:2px;background:#5a8ed0"></div>
  <svg class="abs" style="left:629px;top:8px" width="36" height="26" viewBox="0 0 36 26"><path d="M1 7 L11 0.5 L21 7 V20 H1Z" fill="#1e88d8"/><path d="M1 7 L11 14 L21 7" fill="#5cb8f0" stroke="#fff" stroke-width="0.8"/><circle cx="25" cy="17" r="8" fill="#e8e8e8" stroke="#555" stroke-width="1"/><text x="25" y="21" text-anchor="middle" font-family="Liberation Sans" font-size="10" fill="#111">43</text></svg>
  <svg class="abs" style="left:673px;top:7px" width="24" height="22" viewBox="0 0 24 22"><rect x="7" y="0" width="17" height="22" rx="1.5" fill="#41a5ee"/><rect x="7" y="7" width="17" height="8" fill="#2b7cd3"/><rect x="7" y="15" width="17" height="7" fill="#185abd"/><rect x="0" y="4" width="13" height="13" rx="1" fill="#103f91"/><text x="6.5" y="14.5" text-anchor="middle" font-family="Liberation Sans" font-weight="bold" font-size="10" fill="#fff">W</text></svg>
  <div class="abs" style="left:667px;top:34px;width:36px;height:2px;background:#6c8fc0"></div>
  <div class="abs" style="left:708px;top:0;width:43px;height:36px;background:#efebea"></div>
  <svg class="abs" style="left:717px;top:7px" width="28" height="27" viewBox="0 0 28 27"><circle cx="11.5" cy="11.5" r="11" fill="#db4437"/><path d="M11.5 11.5 L22.2 9 A11 11 0 0 1 6 21 Z" fill="#fbbc05"/><path d="M11.5 11.5 L6 21 A11 11 0 0 1 1.5 6 Z" fill="#0f9d58"/><circle cx="11.5" cy="11.5" r="5" fill="#fff"/><circle cx="11.5" cy="11.5" r="3.8" fill="#4285f4"/><circle cx="19" cy="18.5" r="7.5" fill="#5a3a2e" stroke="#eee" stroke-width="1"/><text x="19" y="22" text-anchor="middle" font-family="Liberation Sans" font-size="9" fill="#ddd">S</text></svg>
  <div class="abs" style="left:708px;top:34px;width:43px;height:2px;background:#6c8fc0"></div>
  <svg class="abs" style="left:762px;top:7px" width="21" height="23" viewBox="0 0 21 23"><path d="M0 3 L10.5 0 L21 3 V15 Q21 19 10.5 23 Q0 19 0 15Z" fill="#c8102e"/><path d="M4 6 L10.5 11 L17 6 V15 L10.5 19 L4 15Z" fill="#fff"/><path d="M6.5 10 L10.5 13 L14.5 10 V14.5 L10.5 17 L6.5 14.5Z" fill="#c8102e"/></svg>
  <div class="abs" style="left:756px;top:34px;width:34px;height:2px;background:#6c8fc0"></div>
  <div class="abs" style="left:800px;top:10px;width:43px;height:16px;background:#fff;border:1px solid #aaa"></div>
  <div class="abs" style="left:801.5px;top:11.5px;width:40px;height:13px;background:#1f9a4a;color:#fff;font-size:12.5px;line-height:13px;text-align:center">100%</div>
  <div class="abs" style="left:843px;top:15px;width:2px;height:6px;background:#ccc"></div>
  <svg class="abs" style="left:849px;top:9px" width="12" height="18"><path d="M3 1 V5 M9 1 V5" stroke="#fff" stroke-width="1.6"/><path d="M1 5 H11 V10 Q11 13 6 13 Q1 13 1 10Z" fill="#fff" stroke="#ddd" stroke-width="0.5"/><path d="M6 13 V17" stroke="#fff" stroke-width="2"/></svg>
  <svg class="abs" style="left:884px;top:6px" width="28" height="22" viewBox="0 0 28 22"><path d="M5 20 Q0 20 0.5 15 Q1 11 6 11.5 Q7 6 13 6 Q19 6 20 11 Q25 11 25 15.5 Q25 20 20 20Z" fill="#a8c8ec"/><circle cx="19" cy="6" r="5.5" fill="#d42b2b"/><text x="19" y="9.5" text-anchor="middle" font-family="Liberation Sans" font-size="8" fill="#fff">1</text></svg>
  <div class="abs" style="left:916px;top:9px;font-size:13.5px;line-height:18px;color:#111;white-space:nowrap">45°F</div>
</div>

<!-- TRAY -->
<div class="abs" style="left:946px;top:628px;width:236px;height:36px;background:#e9edee"></div>
<svg class="abs" style="left:0;top:0" width="1182" height="664" viewBox="0 0 1182 664">
<text x="950" y="660" font-family="Liberation Serif" font-size="42" fill="#acacac" letter-spacing="0.8" opacity="0.75">REALTORS</text>
<circle cx="1169" cy="640" r="6" fill="none" stroke="#aaa" stroke-width="1"/><text x="1169" y="643.5" text-anchor="middle" font-family="Liberation Sans" font-size="8" fill="#999">R</text>
<path d="M966 650 L972 644 L978 650" fill="none" stroke="#222" stroke-width="1.2"/>
<path d="M987 639 Q994 636 1001 639 L1001 647 Q1000 652 994 655 Q988 652 987 647Z" fill="#d42a2a"/>
<path d="M1007 637 Q1015 633 1023 637 L1023 646 Q1022 652 1015 656 Q1008 652 1007 646Z" fill="#fff" stroke="#222" stroke-width="1.2"/><path d="M1015 635 V656 M1007 645 H1023" stroke="#222" stroke-width="1"/><rect x="1018" y="650" width="6" height="5" fill="#e8b820"/>
<path d="M1030 642 H1034 L1039 638 V654 L1034 650 H1030Z" fill="none" stroke="#333" stroke-width="1.1"/><path d="M1042 643 L1047 649 M1047 643 L1042 649" stroke="#333" stroke-width="1.1"/>
<path d="M1052 637 L1057 640 L1052 643Z M1067 637 L1062 640 L1067 643Z" fill="#222"/><rect x="1051" y="644" width="17" height="12" rx="1.5" fill="#e03a4a"/><text x="1059.5" y="654" text-anchor="middle" font-family="Liberation Sans" font-size="8.5" fill="#fff">15</text>
<text x="1083" y="642.5" font-family="Liberation Sans" font-size="11.2" fill="#222">1:58 PM</text>
<text x="1082" y="660" font-family="Liberation Sans" font-size="11.2" fill="#222">1/5/2024</text>
<path d="M1143 640 H1160 V651 H1148 L1143 655Z" fill="#333"/><path d="M1146 643 H1157 M1146 646.5 H1155" stroke="#ddd" stroke-width="1"/>
<circle cx="1157" cy="655" r="6.5" fill="#e8e8e8" stroke="#666" stroke-width="0.8"/><text x="1157" y="659" text-anchor="middle" font-family="Liberation Sans" font-size="10" fill="#111">5</text>
</svg>
<!-- WATERMARK -->
<svg class="abs" style="left:0;top:0" width="1182" height="664" viewBox="0 0 1182 664">
<rect x="946" y="536" width="225" height="92" fill="#fff" opacity="0.3"/>
<circle cx="982.4" cy="552.5" r="15.5" fill="#f0e39a" opacity="0.75"/>
<text x="950" y="611" font-family="Liberation Serif" font-size="90" fill="#b4b4b4" stroke="#8c8c8c" stroke-width="0.8" opacity="0.75" transform="translate(950 611) scale(0.74 1.0) translate(-950 -611)">B</text>
<path d="M1008 585 L1014.8 564.7 L1022.4 585Z M1061 584 L1068.2 563.5 L1076 584Z" fill="#b8d69a" opacity="0.9"/>
<path d="M1020.7 562 L1042.7 536.8 L1062 562.3" fill="none" stroke="#a0a0a0" stroke-width="1.8"/>
<path d="M1031 568 V611 M1050 560 V611" stroke="#a8a8a8" stroke-width="2.5"/>
<text x="1085" y="611" font-family="Liberation Serif" font-size="54" fill="#a8a8a8" letter-spacing="4" opacity="0.75">ngs</text>
<rect x="946" y="612" width="225" height="20" fill="#8eb2c2" opacity="0.92"/>
<text x="957" y="629" font-family="Liberation Serif" font-size="20" fill="#fff" letter-spacing="1.6">ASSOCIATION</text><text x="1134" y="629" font-family="Liberation Serif" font-size="20" fill="#fff" letter-spacing="1.6">OF</text>
</svg>
</body></html>
